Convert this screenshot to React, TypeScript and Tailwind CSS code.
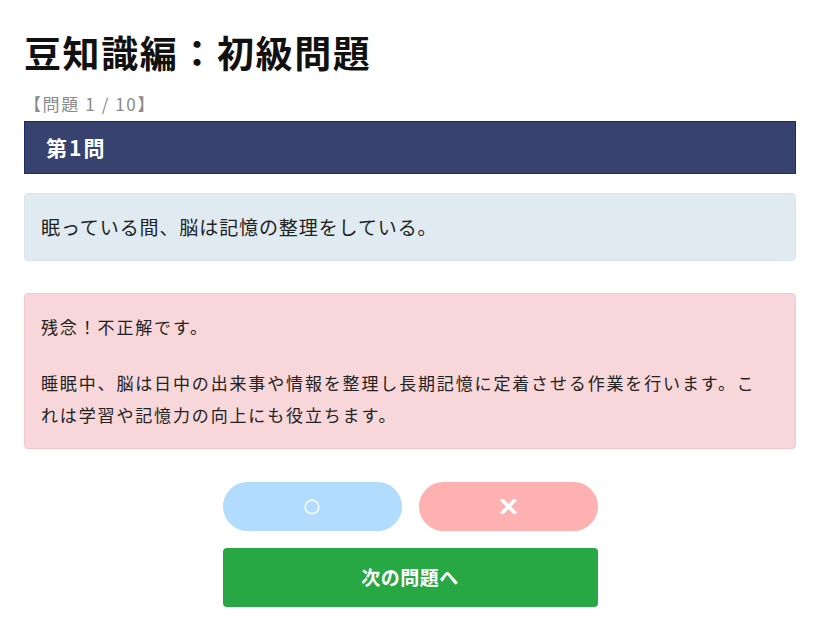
const jp = { fontFamily: '"Noto Sans CJK JP", "Noto Sans", sans-serif' };

function CircleMark() {
  return (
    <svg width="16" height="16" viewBox="0 0 16 16" aria-hidden="true">
      <circle cx="8" cy="8" r="6.8" fill="none" stroke="white" strokeWidth="1.6" />
    </svg>
  );
}

function CrossMark() {
  return (
    <svg width="17" height="15" viewBox="0 0 17 15" aria-hidden="true">
      <path d="M2.5 1.5 L14.5 13.5 M14.5 1.5 L2.5 13.5" stroke="white" strokeWidth="3.6" strokeLinecap="square" />
    </svg>
  );
}

export default function App() {
  return (
    <div className="min-h-[625px] w-full bg-white text-[#222]" style={jp}>
      <div className="ml-[24px] w-[772px] pt-[30px]">
        <h1 className="text-[37px] leading-[44px] font-bold tracking-[1.6px] text-[#111]">
          豆知識編：初級問題
        </h1>
        <p className="mt-[18px] text-[17px] leading-[24px] text-[#8a8a8a] tracking-[1.6px]">
          【問題 1 / 10】
        </p>

        <div className="mt-[5px] h-[53px] flex items-center border border-[#1f2a5e] bg-[#37426f] pl-[21px]">
          <h2 className="text-[21px] font-bold text-white tracking-[2px]">第1問</h2>
        </div>

        <div className="mt-[19px] h-[68px] flex items-center rounded-[4px] border border-[#d6e5ee] bg-[#dfebf1] px-4">
          <p className="text-[19px] tracking-[0.9px] text-[#222]">
            眠っている間、脳は記憶の整理をしている。
          </p>
        </div>

        <div className="mt-[32px] rounded-[4px] border border-[#f5c6cb] bg-[#f8d7da] pl-4 pr-6 py-[17px] text-[17px] leading-[32px] tracking-[1.85px] text-[#222]">
          <p>残念！不正解です。</p>
          <p className="mt-[24px]">
            睡眠中、脳は日中の出来事や情報を整理し長期記憶に定着させる作業を行います。これは学習や記憶力の向上にも役立ちます。
          </p>
        </div>

        <div className="mt-[33px] flex flex-col items-center">
          <div className="flex gap-[17px]">
            <button className="flex h-[49px] w-[179px] items-center justify-center rounded-full bg-[#b1dcfd]">
              <CircleMark />
            </button>
            <button className="flex h-[49px] w-[179px] items-center justify-center rounded-full bg-[#feb1b1]">
              <CrossMark />
            </button>
          </div>
          <button className="mt-[17px] h-[59px] w-[375px] rounded-[4px] bg-[#28a745] text-[19px] font-bold text-white tracking-[0.5px]">
            次の問題へ
          </button>
        </div>
      </div>
    </div>
  );
}
